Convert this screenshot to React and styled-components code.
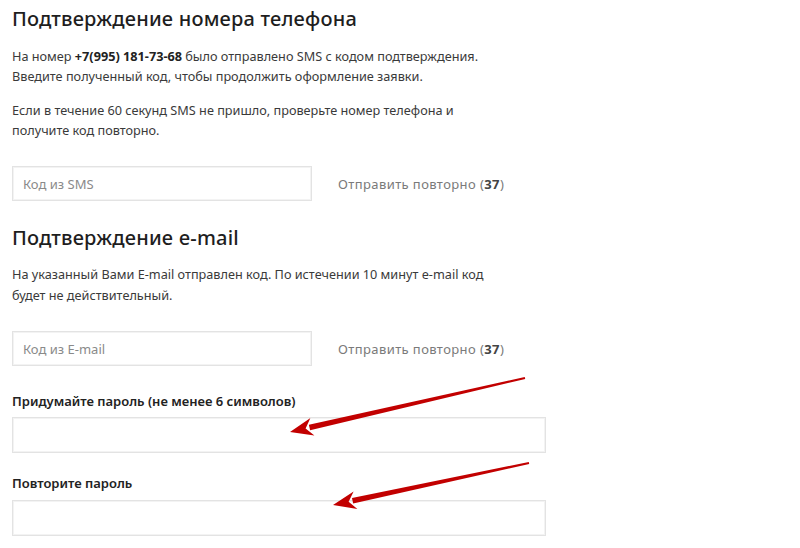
import React from 'react'
import styled, { createGlobalStyle } from 'styled-components'

const GlobalStyle = createGlobalStyle`
    body{
        margin:0;
        background:#fff;
        font-family:"Noto Sans", "Open Sans", sans-serif;
        color:#333;
    }
`

const Page = styled.div`
    position:relative;
    width:800px;
    height:548px;
    padding:7px 12px 0;
    box-sizing:border-box;
    overflow:hidden;
`

const Title = styled.h2`
    margin:${p => p.$top || 0}px 0 0;
    font-size:20px;
    line-height:24px;
    font-weight:500;
    color:#1e1e1e;
    letter-spacing:0.2px;
`

const Text = styled.p`
    margin:${p => p.$top}px 0 0;
    font-size:12.7px;
    line-height:${p => p.$lh || 20}px;
    color:#3a3a3a;
    & b{
        font-weight:700;
        color:#222;
    }
`

const CodeRow = styled.div`
    display:flex;
    align-items:center;
    gap:26px;
    margin-top:${p => p.$top}px;
`

const Input = styled.input`
    box-sizing:border-box;
    width:${p => p.$w}px;
    height:${p => p.$h || 35}px;
    border:1px solid #e3e3e3;
    box-shadow:inset 0 0 0 1px #f3f3f3;
    padding:0 10px;
    font-family:inherit;
    font-size:13px;
    color:#333;
    outline:none;
    display:block;
    &::placeholder{
        color:#8a8a8a;
    }
`

const Resend = styled.span`
    font-size:13px;
    letter-spacing:0.4px;
    color:#7a7a7a;
    & b{
        color:#444;
        font-weight:700;
    }
`

const Label = styled.div`
    margin-top:${p => p.$top}px;
    font-size:13px;
    line-height:16px;
    font-weight:600;
    color:#222;
`

const Field = styled.div`
    margin-top:${p => p.$top}px;
`

const Arrows = styled.svg`
    position:absolute;
    left:0;
    top:0;
    pointer-events:none;
`

function Arrow({ x1, y1, x2, y2 }) {
    const dx = x2 - x1
    const dy = y2 - y1
    const len = Math.sqrt(dx * dx + dy * dy)
    const ux = dx / len
    const uy = dy / len
    const nx = -uy
    const ny = ux
    const head = 20
    const bx = x2 - ux * head
    const by = y2 - uy * head
    const shaft = `M${x1 + nx * 1},${y1 + ny * 1} L${bx + nx * 2.8},${by + ny * 2.8} L${bx - nx * 2.8},${by - ny * 2.8} L${x1 - nx * 1},${y1 - ny * 1} Z`
    const tip = `M${x2},${y2} L${bx + nx * 9 - ux * 3},${by + ny * 9 - uy * 3} L${bx + ux * 4},${by + uy * 4} L${bx - nx * 9 - ux * 3},${by - ny * 9 - uy * 3} Z`
    return (
        <g fill="#c20000">
            <path d={shaft} />
            <path d={tip} />
        </g>
    )
}

export default function App() {
    return (
        <Page>
            <GlobalStyle />
            <Title>Подтверждение номера телефона</Title>
            <Text $top={15}>
                На номер <b>+7(995) 181-73-68</b> было отправлено SMS с кодом подтверждения.<br />
                Введите полученный код, чтобы продолжить оформление заявки.
            </Text>
            <Text $top={14}>
                Если в течение 60 секунд SMS не пришло, проверьте номер телефона и<br />
                получите код повторно.
            </Text>
            <CodeRow $top={26}>
                <Input $w={300} placeholder="Код из SMS" />
                <Resend>Отправить повторно (<b>37</b>)</Resend>
            </CodeRow>

            <Title $top={25}>Подтверждение e-mail</Title>
            <Text $top={14} $lh={21}>
                На указанный Вами E-mail отправлен код. По истечении 10 минут e-mail код<br />
                будет не действительный.
            </Text>
            <CodeRow $top={25}>
                <Input $w={300} placeholder="Код из E-mail" />
                <Resend>Отправить повторно (<b>37</b>)</Resend>
            </CodeRow>

            <Label $top={27}>Придумайте пароль (не менее 6 символов)</Label>
            <Field $top={8}>
                <Input $w={534} $h={36} type="password" />
            </Field>
            <Label $top={22}>Повторите пароль</Label>
            <Field $top={9}>
                <Input $w={534} $h={36} type="password" />
            </Field>

            <Arrows width="800" height="548">
                <Arrow x1={525} y1={378} x2={290} y2={432} />
                <Arrow x1={529} y1={463} x2={333} y2={505} />
            </Arrows>
        </Page>
    )
}
